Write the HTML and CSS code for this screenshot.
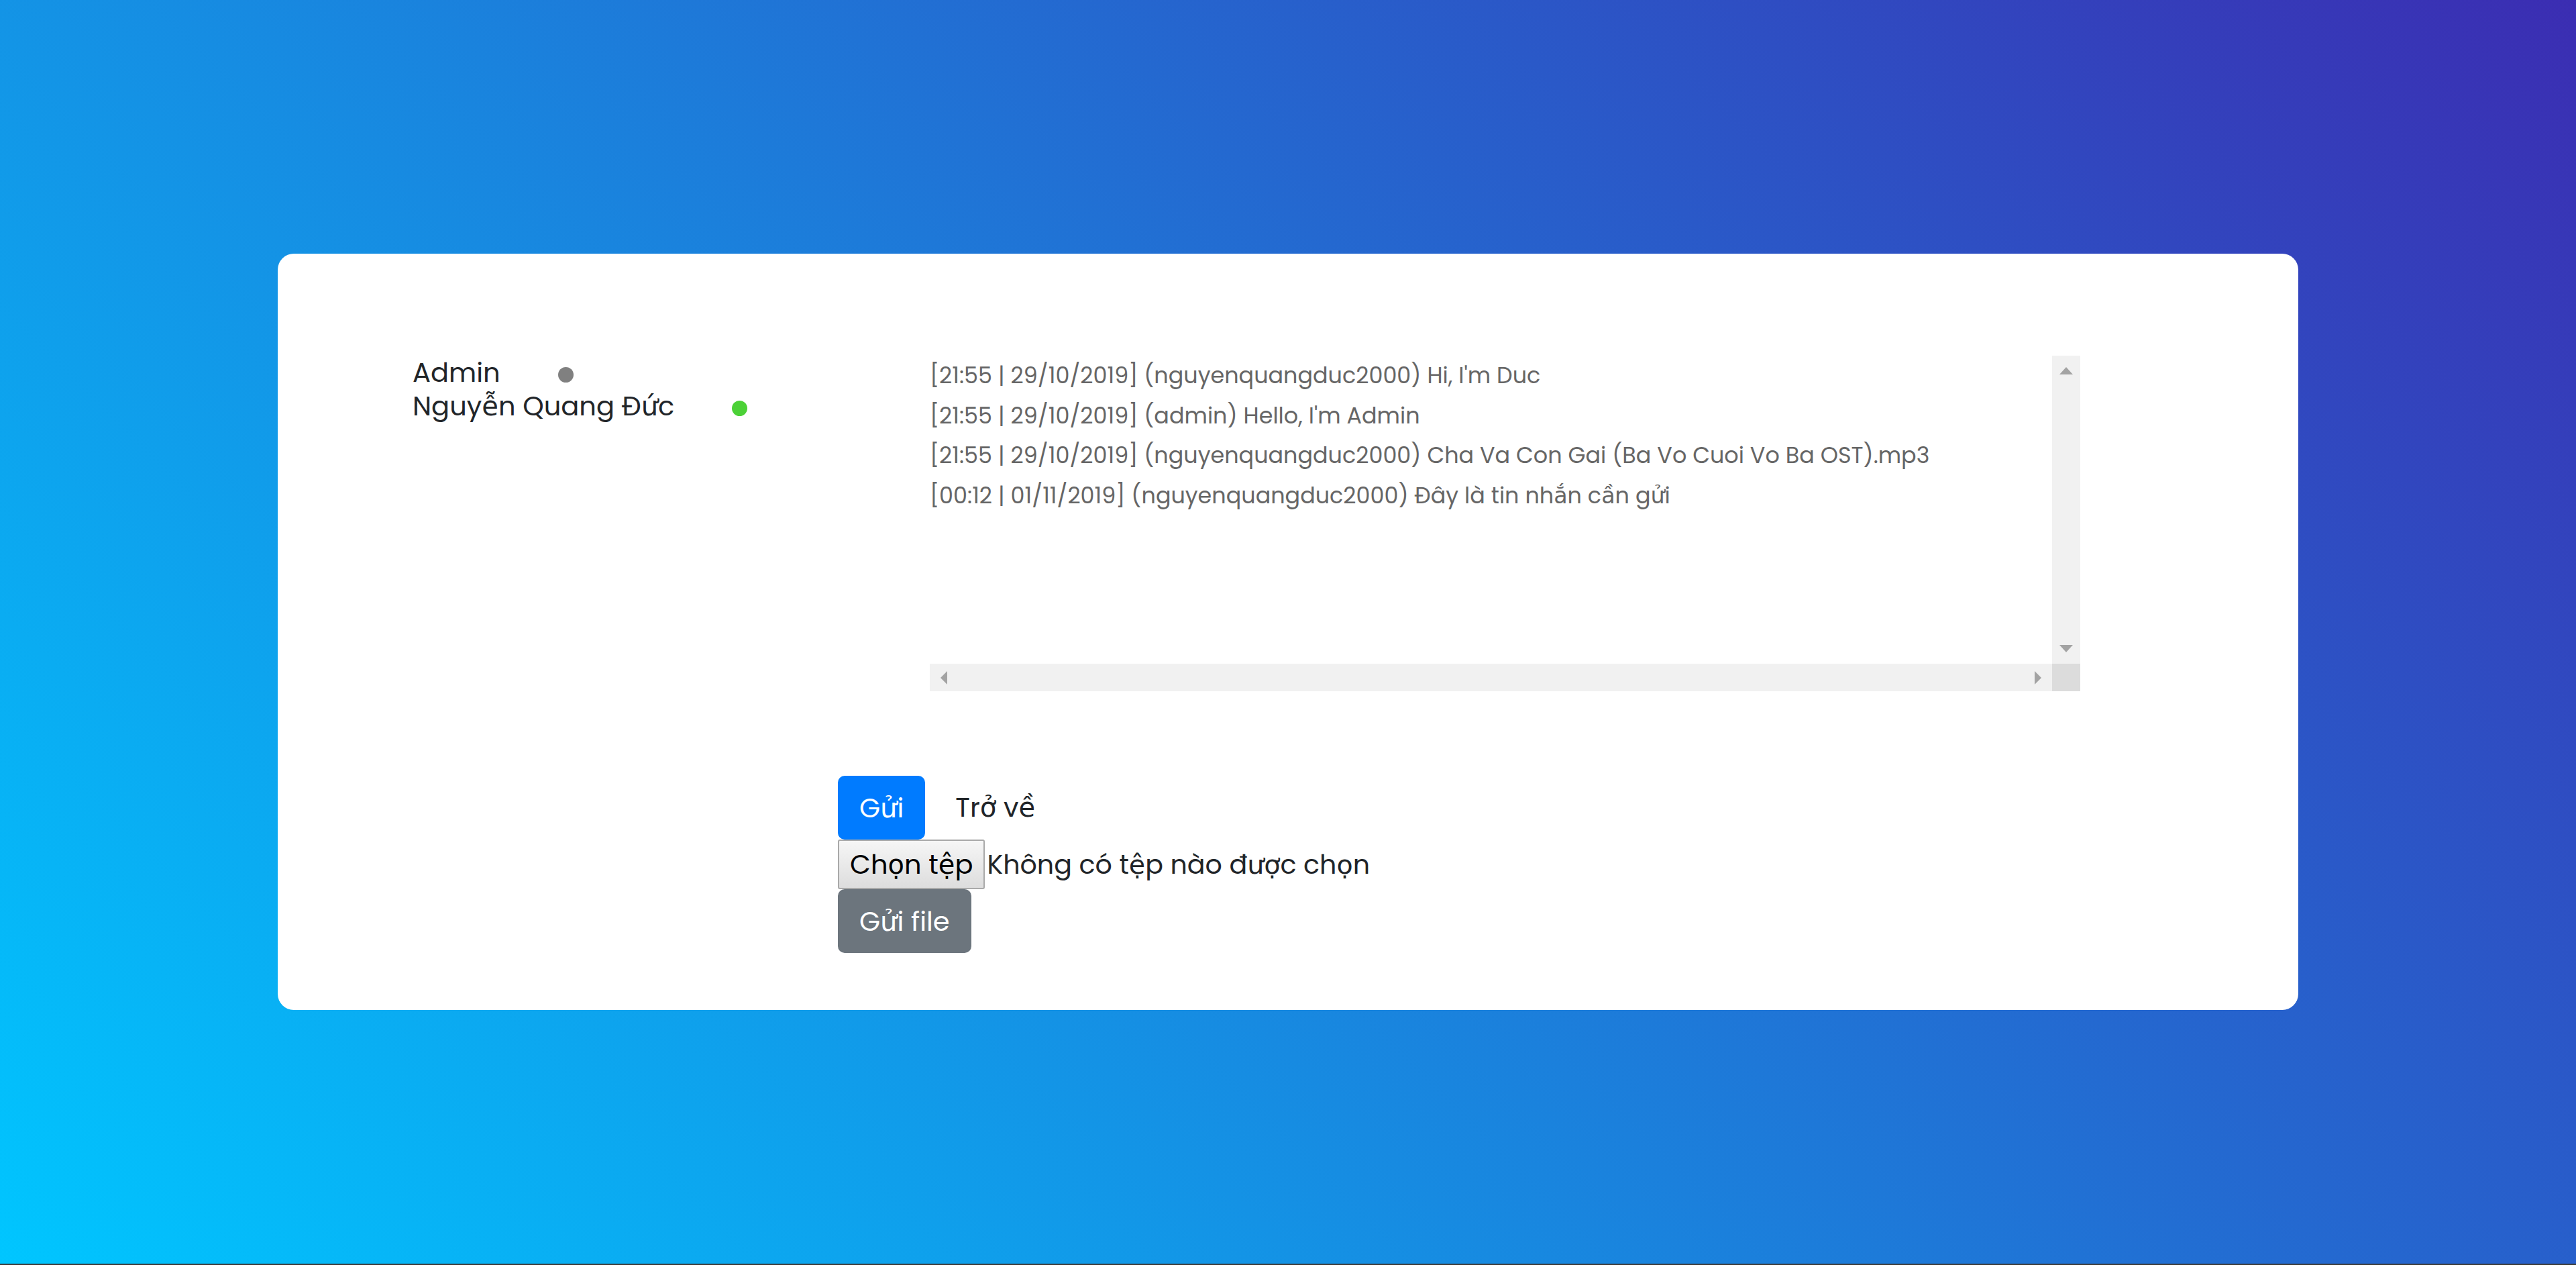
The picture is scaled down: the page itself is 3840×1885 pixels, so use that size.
FILE: index.html
```html
<!DOCTYPE html>
<html lang="vi">
<head>
<meta charset="utf-8">
<title>Chat</title>
<link rel="stylesheet" href="styles.css">
</head>
<body>
<main class="page">
  <section class="card">
    <div class="chat-row">
      <ul class="users">
        <li class="user"><span class="user-name">Admin</span><span class="status status-offline"></span></li>
        <li class="user"><span class="user-name">Nguyễn Quang Đức</span><span class="status status-online"></span></li>
      </ul>
      <div class="chatbox">
        <div class="log">
          <div class="msg">[21:55 | 29/10/2019] (nguyenquangduc2000) Hi, I'm Duc</div>
          <div class="msg">[21:55 | 29/10/2019] (admin) Hello, I'm Admin</div>
          <div class="msg">[21:55 | 29/10/2019] (nguyenquangduc2000) Cha Va Con Gai (Ba Vo Cuoi Vo Ba OST).mp3</div>
          <div class="msg">[00:12 | 01/11/2019] (nguyenquangduc2000) Đây là tin nhắn cần gửi</div>
        </div>
        <div class="vbar">
          <svg class="arrow" width="20" height="11" viewBox="0 0 20 11"><polygon points="0,11 10,0 20,11"/></svg>
          <svg class="arrow" width="20" height="11" viewBox="0 0 20 11"><polygon points="0,0 20,0 10,11"/></svg>
        </div>
        <div class="hbar">
          <svg class="arrow" width="10" height="20" viewBox="0 0 10 20"><polygon points="10,0 10,20 0,10"/></svg>
          <svg class="arrow" width="10" height="20" viewBox="0 0 10 20"><polygon points="0,0 10,10 0,20"/></svg>
        </div>
        <div class="corner"></div>
      </div>
    </div>
    <form class="composer">
      <div class="actions">
        <button type="button" class="btn btn-primary">Gửi</button>
        <a class="btn btn-plain">Trở về</a>
      </div>
      <label class="file">
        <span class="file-btn">Chọn tệp</span>
        <span class="file-name">Không có tệp nào được chọn</span>
      </label>
      <div class="file-actions">
        <button type="button" class="btn btn-secondary">Gửi file</button>
      </div>
    </form>
  </section>
</main>
<div class="taskbar"></div>
</body>
</html>
```
FILE: styles.css
```css
html, body {
  margin: 0;
  padding: 0;
}

body {
  height: 1885px;
  display: flex;
  flex-direction: column;
  overflow: hidden;
  background: linear-gradient(45deg, #00c6ff 0%, #3b2db2 100%);
  font-family: "Poppins", "DejaVu Sans", sans-serif;
  color: #212529;
}

.page {
  flex: 1;
  display: flex;
  align-items: center;
  justify-content: center;
}

.taskbar {
  height: 2px;
  background: #3a3a3a;
}

.card {
  width: 3012px;
  box-sizing: border-box;
  background: #fff;
  border-radius: 24px;
  padding: 152px 0 85px;
}

.chat-row {
  display: flex;
  padding-left: 201px;
}

.users {
  list-style: none;
  margin: 0;
  padding: 0;
  width: 771px;
  flex: none;
  font-size: 40px;
  line-height: 50px;
}

.status {
  display: inline-block;
  width: 23px;
  height: 23px;
  border-radius: 50%;
  margin-left: 86px;
  vertical-align: middle;
}

.status-offline {
  background: #808080;
}

.status-online {
  background: #4cd137;
}

.chatbox {
  width: 1715px;
  height: 500px;
  flex: none;
  display: grid;
  grid-template-columns: 1fr 42px;
  grid-template-rows: 1fr 41px;
}

.log {
  font-size: 33.4px;
  line-height: 59.5px;
  color: #666;
  white-space: nowrap;
  overflow: hidden;
}

.arrow {
  fill: #a3a3a3;
  display: block;
}

.vbar {
  background: #f1f1f1;
  display: flex;
  flex-direction: column;
  justify-content: space-between;
  align-items: center;
  padding: 17px 0;
}

.hbar {
  background: #f1f1f1;
  display: flex;
  justify-content: space-between;
  align-items: center;
  padding: 0 16px;
}

.corner {
  background: #dcdcdc;
}

.composer {
  margin: 126px 0 0 835px;
  display: flex;
  flex-direction: column;
  align-items: flex-start;
  font-size: 40px;
}

.actions {
  display: flex;
  align-items: center;
  gap: 13px;
}

.btn {
  display: inline-block;
  box-sizing: border-box;
  height: 95px;
  padding: 15px 30px;
  border: 2.5px solid transparent;
  border-radius: 10px;
  font-family: inherit;
  font-size: 40px;
  line-height: 60px;
  color: #212529;
  background: transparent;
  text-decoration: none;
  cursor: pointer;
}

.btn-primary {
  background: #007bff;
  border-color: #007bff;
  color: #fff;
}

.btn-secondary {
  background: #6c757d;
  border-color: #6c757d;
  color: #fff;
}

.file {
  display: flex;
  align-items: center;
  height: 74px;
}

.file-btn {
  display: flex;
  align-items: center;
  box-sizing: border-box;
  height: 74px;
  padding: 0 16px;
  border: 2px solid #a9a9a9;
  border-radius: 3px;
  background: linear-gradient(#f6f6f6, #dddddd);
  color: #000;
}

.file-name {
  margin-left: 3px;
  font-size: 39.6px;
  color: #212529;
}

.file-actions {
  display: flex;
}
```
